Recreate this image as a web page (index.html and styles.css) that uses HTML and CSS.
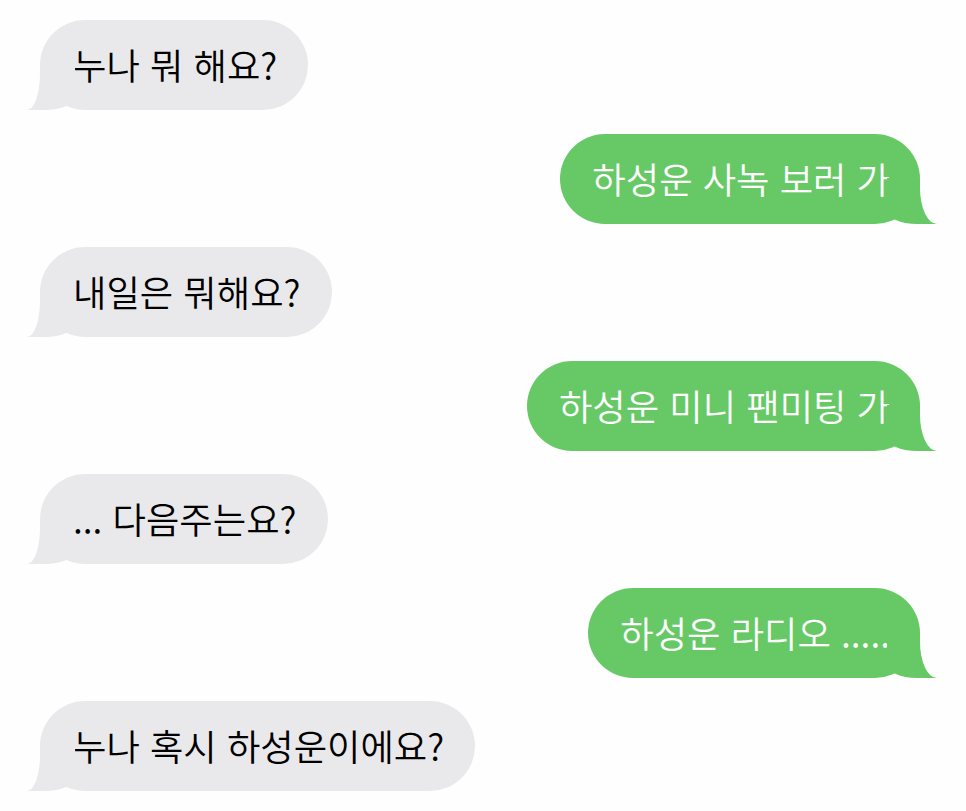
FILE: index.html
```html
<!DOCTYPE html>
<html lang="ko">
<head>
    <meta charset="UTF-8">
    <meta name="viewport" content="width=device-width, initial-scale=1.0">
    <title>Messages</title>
    <link rel="stylesheet" href="styles.css">
</head>
<body>
    <div class="chat">
        <div class="bubble received">누나 뭐 해요?</div>
        <div class="bubble sent">하성운 사녹 보러 가</div>
        <div class="bubble received">내일은 뭐해요?</div>
        <div class="bubble sent">하성운 미니 팬미팅 가</div>
        <div class="bubble received">... 다음주는요?</div>
        <div class="bubble sent">하성운 라디오 .....</div>
        <div class="bubble received">누나 혹시 하성운이에요?</div>
    </div>
</body>
</html>
```

FILE: styles.css
```css
body {
    margin: 0;
    padding: 0;
    background-color: #fefefe;
    font-family: "Noto Sans CJK KR", "Noto Sans", sans-serif;
}
.chat {
    display: flex;
    flex-direction: column;
    gap: 23.5px;
    padding: 20px 46px 20px 40px;
}
.bubble {
    position: relative;
    height: 90px;
    line-height: 88px;
    padding: 0 31px 0 33px;
    border-radius: 45px;
    font-size: 36.3px;
    font-weight: 350;
    white-space: nowrap;
}
.bubble::before,
.bubble::after {
    content: "";
    position: absolute;
    bottom: 0;
    height: 46px;
}
.received {
    align-self: flex-start;
    background: #e9e9eb;
    color: #000;
}
.received::before {
    left: -13px;
    width: 48px;
    background: #e9e9eb;
    border-bottom-right-radius: 30px 14px;
}
.received::after {
    left: -34px;
    width: 34px;
    background: #fefefe;
    border-bottom-right-radius: 13px 36px;
}
.sent {
    align-self: flex-end;
    background: #66c966;
    color: #fff;
    padding: 0 30px 0 32px;
}
.sent::before {
    right: -17px;
    width: 50px;
    background: #66c966;
    border-bottom-left-radius: 30px 14px;
}
.sent::after {
    right: -34px;
    width: 34px;
    background: #fefefe;
    border-bottom-left-radius: 17px 36px;
}
```
